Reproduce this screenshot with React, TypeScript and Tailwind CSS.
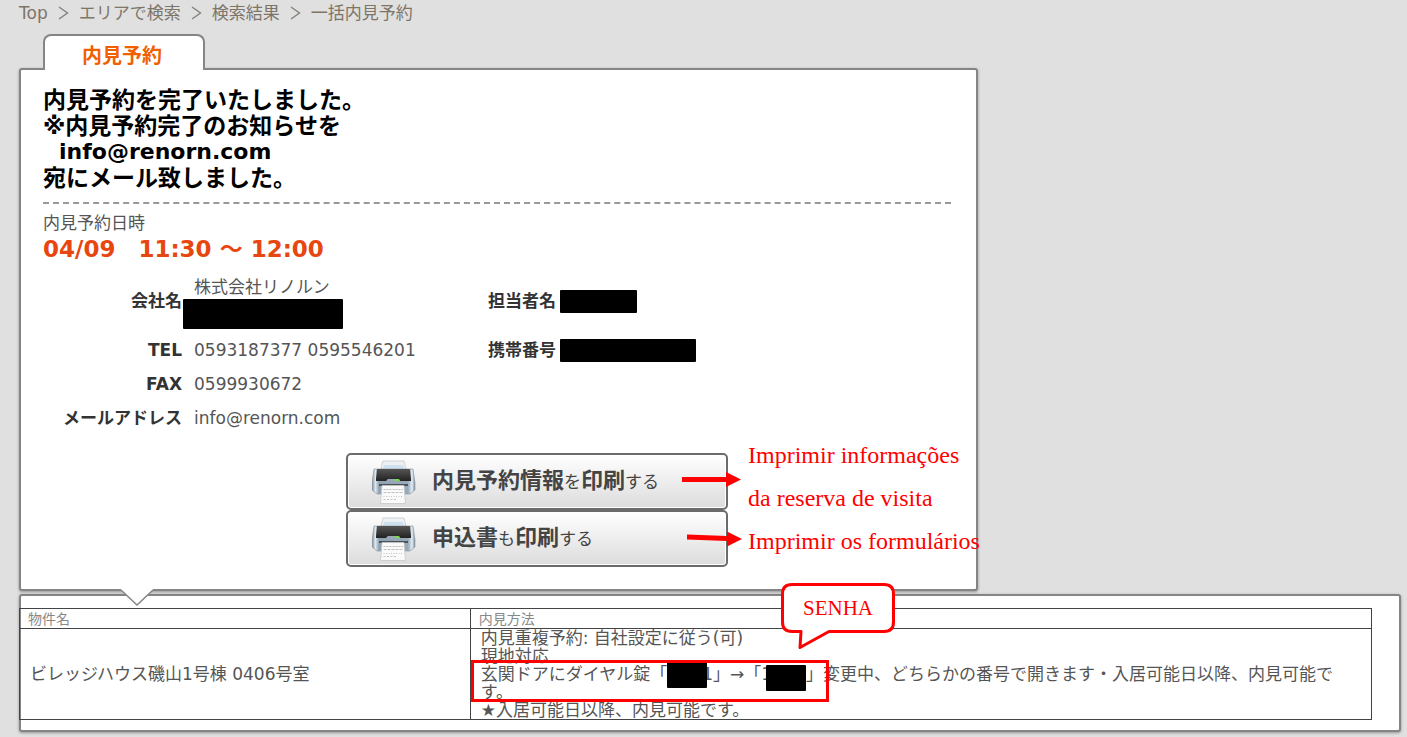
import React from 'react';

const crumbs = ['Top', 'エリアで検索', '検索結果'];

const Chevron: React.FC = () => (
  <svg width="11" height="14" viewBox="0 0 11 14" fill="none" stroke="#85807a" strokeWidth="1.4" aria-hidden="true">
    <path d="M1 1 L9.500 7 L1 13" />
  </svg>
);

const Redacted: React.FC<{ className: string }> = ({ className }) => (
  <span className={`block rounded-[1px] bg-black ${className}`} />
);

const PrinterIcon: React.FC<{ id: string }> = ({ id }) => (
  <svg width="44" height="44" viewBox="0 0 44 44" className="shrink-0" aria-hidden="true">
    <defs>
      <linearGradient id={`${id}-body`} x1="0" y1="0" x2="1" y2="0">
        <stop offset="0" stopColor="#7d8b99" />
        <stop offset="0.08" stopColor="#dfe8ef" />
        <stop offset="0.16" stopColor="#8fa2b2" />
        <stop offset="0.84" stopColor="#98aab9" />
        <stop offset="0.93" stopColor="#e4edf4" />
        <stop offset="1" stopColor="#7d8b99" />
      </linearGradient>
      <linearGradient id={`${id}-lid`} x1="0" y1="0" x2="0" y2="1">
        <stop offset="0" stopColor="#555" />
        <stop offset="1" stopColor="#222" />
      </linearGradient>
    </defs>
    <path d="M11 1 H32 L34 9 H9 Z" fill="#eef1f4" stroke="#c3cad0" strokeWidth="0.8" />
    <path d="M12 5 H31 L32 9 H11 Z" fill="#cfe0ee" />
    <path d="M2 9 H41 L43 23 V30 L38 34 H5 L0 30 V23 Z" fill={`url(#${id}-body)`} stroke="#8593a0" strokeWidth="0.6" />
    <path d="M5 9 H38 L39 19 V21 H28 L26 19 H16 L14 21 H4 V19 Z" fill={`url(#${id}-lid)`} />
    <path d="M16 19 H27 L29 22 H14 Z" fill="#9aa9b5" />
    <rect x="22.5" y="19" width="4.500" height="2" rx="1" fill="#6fe23c" />
    <path d="M7 24 H36 V26 H7 Z" fill="#4a525a" />
    <path d="M10 25.500 H32 L33.500 43.500 H8.500 Z" fill="#fafafa" stroke="#c6c6c6" strokeWidth="0.8" />
    <path d="M11.500 29.500 H31" stroke="#bbb" strokeDasharray="2 1" />
    <path d="M11.500 32.500 H31" stroke="#c2c2c2" strokeDasharray="3 1" />
    <path d="M11.500 36.500 H31" stroke="#c2c2c2" strokeDasharray="1 1.5" />
    <path d="M11.500 39.500 H24" stroke="#c2c2c2" strokeDasharray="2 1.5" />
  </svg>
);

const printButton =
  'flex h-[57px] w-full items-center gap-4 rounded-[5px] border-2 border-[#6b6b6b] bg-linear-to-b from-white to-[#dcdcdc] pl-6 text-[17px] text-[#444] shadow-[inset_0_0_0_1px_#fff]';

const App: React.FC = () => {
  return (
    <main className="min-h-screen overflow-hidden bg-[#e0e0e0] pr-[6px] pb-1 pl-[19px] font-['DejaVu_Sans','Noto_Sans_CJK_JP',sans-serif] text-[17px] leading-[18px] text-[#555]">
      <nav className="mb-2 flex h-[26px] items-center gap-[10px] text-[#7d7568]">
        {crumbs.map((crumb) => (
          <React.Fragment key={crumb}>
            <a href="#">{crumb}</a>
            <Chevron />
          </React.Fragment>
        ))}
        <span>一括内見予約</span>
      </nav>

      {/* Tab */}
      <h1 className="relative z-30 -mb-[2px] ml-6 flex h-9 w-[162px] items-center rounded-t-lg border-2 border-b-0 border-[#858585] bg-white px-[37px] pt-[6px] text-[20px] font-bold text-[#f06000]">
        内見予約
      </h1>

      {/* Reservation details */}
      <section className="relative z-20 max-w-[959px] rounded-[3px] border-2 border-[#858585] bg-white px-[22px] pt-[17px] pb-[22px] shadow-[0_1px_3px_rgba(0,0,0,0.35)]">
        <div className="mr-[3px] border-b-2 border-dashed border-[#999] pb-[11px] text-[23px] leading-[26px] font-bold text-black">
          <p>内見予約を完了いたしました。</p>
          <p>※内見予約完了のお知らせを</p>
          <p className="pl-4 text-[22px]">info@renorn.com</p>
          <p>宛にメール致しました。</p>
        </div>

        <h2 className="pt-[10px]">内見予約日時</h2>
        <p className="pt-1 text-[23px] leading-[26px] font-bold text-[#e84610]">04/09　11:30 ～ 12:00</p>

        <div className="mt-[7px] flex">
          <dl className="grid w-[445px] grid-cols-[139px_1fr] grid-rows-[64px_34px_34px_34px] items-center gap-x-3">
            <dt className="text-right font-bold text-[#333]">会社名</dt>
            <dd className="pt-[2px]">
              <span className="block leading-6">株式会社リノルン</span>
              <Redacted className="-ml-[11px] h-[30px] w-40" />
            </dd>
            <dt className="text-right font-bold text-[#333]">TEL</dt>
            <dd>0593187377 0595546201</dd>
            <dt className="text-right font-bold text-[#333]">FAX</dt>
            <dd>0599930672</dd>
            <dt className="text-right font-bold text-[#333]">メールアドレス</dt>
            <dd>info@renorn.com</dd>
          </dl>
          <dl className="grid grid-cols-[70px_1fr] grid-rows-[64px_34px] items-center gap-x-[2px] self-start">
            <dt className="font-bold text-[#333]">担当者名</dt>
            <dd>
              <Redacted className="h-[23px] w-[77px]" />
            </dd>
            <dt className="font-bold text-[#333]">携帯番号</dt>
            <dd>
              <Redacted className="h-[23px] w-[136px]" />
            </dd>
          </dl>
        </div>

        <div className="relative mt-[18px] ml-[303px] w-[382px]">
          <button type="button" className={printButton}>
            <PrinterIcon id="info" />
            <span>
              <b className="text-[22px]">内見予約情報</b>を<b className="text-[22px]">印刷</b>する
            </span>
          </button>
          <button type="button" className={printButton}>
            <PrinterIcon id="form" />
            <span>
              <b className="text-[22px]">申込書</b>も<b className="text-[22px]">印刷</b>する
            </span>
          </button>

          {/* Notes beside the buttons */}
          <svg width="62" height="114" viewBox="0 0 62 114" className="absolute top-0 left-[336px]" fill="#f00" aria-hidden="true">
            <path d="M0 24 H44 V19 L59 26.500 L44 34 V29 H0 Z" />
            <path d="M5 81.500 L45 83 V78.500 L60 86 L45 93.500 V88 L5 86.500 Z" />
          </svg>
          <div className="absolute -top-[19px] left-[402px] font-['Liberation_Serif',serif] text-[24px] leading-[43px] whitespace-nowrap text-[#f00]">
            <p>Imprimir informações</p>
            <p>da reserva de visita</p>
            <p>Imprimir os formulários</p>
          </div>
        </div>

        {/* Pointer into the property list */}
        <svg width="32" height="18" viewBox="0 0 32 18" className="absolute -bottom-[18px] left-[100px]" aria-hidden="true">
          <path d="M0 0 H32 V1 L16 16 L0 1 Z" fill="#fff" />
          <path d="M0 1 L16 16 L32 1" fill="none" stroke="#858585" strokeWidth="1.5" />
        </svg>
      </section>

      {/* Password callout, over the top edge of the property list */}
      <div className="relative z-30 h-0">
        <div className="absolute -top-2 left-[762px] h-[68px] w-[116px]">
          <svg width="116" height="68" viewBox="0 0 116 68" className="absolute inset-0" aria-hidden="true">
            <path
              d="M11 1.500 H103 Q112.500 1.500 112.500 11 V39 Q112.500 48.500 103 48.500 H48 L19 64.500 L20 48.500 H11 Q1.500 48.500 1.500 39 V11 Q1.500 1.500 11 1.500 Z"
              fill="#fff"
              stroke="#f00"
              strokeWidth="3"
              strokeLinejoin="round"
            />
          </svg>
          <p className="relative text-center font-['Liberation_Serif',serif] text-[21px] leading-[50px] text-[#f00] pr-[2px]">SENHA</p>
        </div>
      </div>

      {/* Property list */}
      <section className="relative mt-[3px] rounded-[3px] border-2 border-[#858585] bg-white pt-3 pr-[27px] pb-[10px] shadow-[0_1px_3px_rgba(0,0,0,0.35)]">
        <div className="-ml-[2px]">
          <table className="w-full table-fixed border-collapse text-left">
            <thead>
              <tr className="h-5 text-[14px] leading-[18px] text-[#888]">
                <th className="w-1/3 border border-[#444] px-2 font-normal">物件名</th>
                <th className="border border-[#444] px-2 font-normal">内見方法</th>
              </tr>
            </thead>
            <tbody>
              <tr>
                <td className="border border-[#444] px-[10px]">ビレッジハウス磯山1号棟 0406号室</td>
                <td className="relative border border-[#444] px-[10px] whitespace-nowrap">
                  <p>内見重複予約: 自社設定に従う(可)</p>
                  <p>現地対応</p>
                  <p className="flex h-[18px]">
                    玄関ドアにダイヤル錠「
                    <Redacted className="relative -mt-[3px] -mr-[5px] h-[26px] w-10" />
                    1」→「1
                    <Redacted className="relative -ml-[6px] h-[26px] w-10" />
                    」変更中、どちらかの番号で開きます・入居可能日以降、内見可能で
                  </p>
                  <p>す。</p>
                  <p>★入居可能日以降、内見可能です。</p>
                  <span className="absolute top-[31px] left-0 h-[42px] w-[358px] border-3 border-[#f00]" />
                </td>
              </tr>
            </tbody>
          </table>
        </div>
      </section>
    </main>
  );
};

export default App;
